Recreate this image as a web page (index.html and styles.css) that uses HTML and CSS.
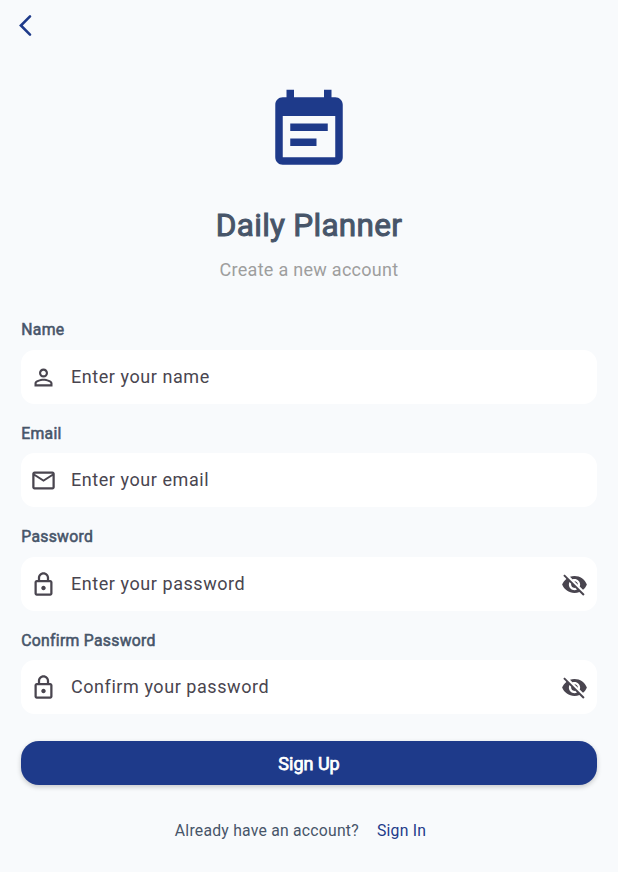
FILE: index.html
```html
<!DOCTYPE html>
<html lang="en">
<head>
<meta charset="utf-8">
<title>Daily Planner</title>
<link rel="stylesheet" href="styles.css">
</head>
<body>
<main class="screen">
  <header class="topbar">
    <svg class="back" viewBox="0 0 25 25"><path d="M17 3.3 7.9 12.5 17 21.7"/></svg>
  </header>
  <section class="brand">
    <svg class="logo" viewBox="0 0 24 24"><path d="M17 10H7v2h10v-2zm2-7h-1V1h-2v2H8V1H6v2H5c-1.11 0-1.99.9-1.99 2L3 19c0 1.1.89 2 2 2h14c1.1 0 2-.9 2-2V5c0-1.1-.9-2-2-2zm0 16H5V8h14v11zm-5-5H7v2h7v-2z"/></svg>
    <h1 class="title">Daily Planner</h1>
    <p class="subtitle">Create a new account</p>
  </section>
  <form class="form">
    <div class="group">
      <span class="label">Name</span>
      <div class="field">
        <svg class="icon" viewBox="0 0 24 24"><path d="M12 5.9c1.16 0 2.1.94 2.1 2.1s-.94 2.1-2.1 2.1S9.9 9.16 9.9 8s.94-2.1 2.1-2.1m0 9c2.97 0 6.1 1.46 6.1 2.1v1.1H5.9V17c0-.64 3.13-2.1 6.1-2.1M12 4C9.79 4 8 5.79 8 8s1.79 4 4 4 4-1.79 4-4-1.79-4-4-4zm0 9c-2.67 0-8 1.34-8 4v3h16v-3c0-2.66-5.33-4-8-4z"/></svg>
        <span class="hint">Enter your name</span>
      </div>
    </div>
    <div class="group">
      <span class="label">Email</span>
      <div class="field">
        <svg class="icon" viewBox="0 0 24 24"><path d="M22 6c0-1.1-.9-2-2-2H4c-1.1 0-2 .9-2 2v12c0 1.1.9 2 2 2h16c1.1 0 2-.9 2-2V6zm-2 0-8 5-8-5h16zm0 12H4V8l8 5 8-5v10z"/></svg>
        <span class="hint">Enter your email</span>
      </div>
    </div>
    <div class="group">
      <span class="label">Password</span>
      <div class="field">
        <svg class="icon" viewBox="0 0 24 24"><path d="M18 8h-1V6c0-2.76-2.24-5-5-5S7 3.24 7 6v2H6c-1.1 0-2 .9-2 2v10c0 1.1.9 2 2 2h12c1.1 0 2-.9 2-2V10c0-1.1-.9-2-2-2zM9 6c0-1.66 1.34-3 3-3s3 1.34 3 3v2H9V6zm9 14H6V10h12v10zm-6-3c1.1 0 2-.9 2-2s-.9-2-2-2-2 .9-2 2 .9 2 2 2z"/></svg>
        <span class="hint">Enter your password</span>
        <svg class="icon" viewBox="0 0 24 24"><path d="M12 7c2.76 0 5 2.24 5 5 0 .65-.13 1.26-.36 1.83l2.92 2.92c1.51-1.26 2.7-2.89 3.43-4.75-1.73-4.39-6-7.5-11-7.5-1.4 0-2.74.25-3.98.7l2.16 2.16C10.74 7.13 11.35 7 12 7zM2 4.27l2.28 2.28.46.46C3.08 8.3 1.78 10.02 1 12c1.73 4.39 6 7.5 11 7.5 1.55 0 3.03-.3 4.38-.84l.42.42L19.73 22 21 20.73 3.27 3 2 4.27zM7.53 9.8l1.55 1.55c-.05.21-.08.43-.08.65 0 1.66 1.34 3 3 3 .22 0 .44-.03.65-.08l1.55 1.55c-.67.33-1.41.53-2.2.53-2.76 0-5-2.24-5-5 0-.79.2-1.53.53-2.2zm4.31-.78 3.15 3.15.02-.16c0-1.66-1.34-3-3-3l-.17.01z"/></svg>
      </div>
    </div>
    <div class="group">
      <span class="label">Confirm Password</span>
      <div class="field">
        <svg class="icon" viewBox="0 0 24 24"><path d="M18 8h-1V6c0-2.76-2.24-5-5-5S7 3.24 7 6v2H6c-1.1 0-2 .9-2 2v10c0 1.1.9 2 2 2h12c1.1 0 2-.9 2-2V10c0-1.1-.9-2-2-2zM9 6c0-1.66 1.34-3 3-3s3 1.34 3 3v2H9V6zm9 14H6V10h12v10zm-6-3c1.1 0 2-.9 2-2s-.9-2-2-2-2 .9-2 2 .9 2 2 2z"/></svg>
        <span class="hint">Confirm your password</span>
        <svg class="icon" viewBox="0 0 24 24"><path d="M12 7c2.76 0 5 2.24 5 5 0 .65-.13 1.26-.36 1.83l2.92 2.92c1.51-1.26 2.7-2.89 3.43-4.75-1.73-4.39-6-7.5-11-7.5-1.4 0-2.74.25-3.98.7l2.16 2.16C10.74 7.13 11.35 7 12 7zM2 4.27l2.28 2.28.46.46C3.08 8.3 1.78 10.02 1 12c1.73 4.39 6 7.5 11 7.5 1.55 0 3.03-.3 4.38-.84l.42.42L19.73 22 21 20.73 3.27 3 2 4.27zM7.53 9.8l1.55 1.55c-.05.21-.08.43-.08.65 0 1.66 1.34 3 3 3 .22 0 .44-.03.65-.08l1.55 1.55c-.67.33-1.41.53-2.2.53-2.76 0-5-2.24-5-5 0-.79.2-1.53.53-2.2zm4.31-.78 3.15 3.15.02-.16c0-1.66-1.34-3-3-3l-.17.01z"/></svg>
      </div>
    </div>
    <button class="submit" type="button">Sign Up</button>
  </form>
  <footer class="footer"><span>Already have an account?</span><a class="signin">Sign In</a></footer>
</main>
</body>
</html>
```

FILE: styles.css
```css
* { box-sizing: border-box; }
body {
  margin: 0;
  background: #f8fafc;
  color: #475569;
  font-family: Roboto, "Liberation Sans", sans-serif;
}
.screen { height: 872px; padding: 0 21px; overflow: hidden; }
svg { display: block; flex: none; }
.topbar { height: 82px; padding-top: 13px; }
.back { width: 25px; height: 25px; margin-left: -8px; fill: none; stroke: #1e3a8a; stroke-width: 2.6; stroke-linecap: round; }
.brand { display: flex; flex-direction: column; align-items: center; height: 238px; }
.logo { width: 90px; height: 90px; margin-top: 4px; fill: #1e3a8a; }
.title { margin: 29px 0 0; font-size: 31.5px; line-height: 42px; font-weight: 400; letter-spacing: .28px; -webkit-text-stroke: 1px currentColor; }
.subtitle { margin: 11px 0 0; font-size: 18px; line-height: 24px; letter-spacing: .28px; color: #9e9e9e; }
.form { display: flex; flex-direction: column; }
.group { height: 103.5px; }
.label { display: block; height: 29.9px; padding-left: .3px; font-size: 15.75px; line-height: 19px; font-weight: 400; letter-spacing: .28px; -webkit-text-stroke: .55px currentColor; }
.field {
  display: flex;
  align-items: center;
  height: 54px;
  padding: 0 9px;
  border-radius: 13.5px;
  background: #fff;
}
.icon { width: 27px; height: 27px; margin-top: .5px; fill: #49454f; }
.hint { flex: 1; margin-left: 14px; font-size: 18px; line-height: 24px; letter-spacing: .56px; color: #49454f; }
.submit {
  height: 44px;
  margin-top: 7.4px;
  padding: 1px 0 0;
  border: 0;
  border-radius: 18px;
  background: #1e3a8a;
  color: #fff;
  font: 400 18px/24px Roboto, sans-serif;
  -webkit-text-stroke: .75px currentColor;
  box-shadow: 0 2px 5px rgba(0, 0, 0, .2);
}
.footer { display: flex; justify-content: center; gap: 18px; margin: 35.6px 0 0 -17px; font-size: 15.75px; line-height: 20px; letter-spacing: .23px; }
.signin { color: #1e3a8a; }
```
